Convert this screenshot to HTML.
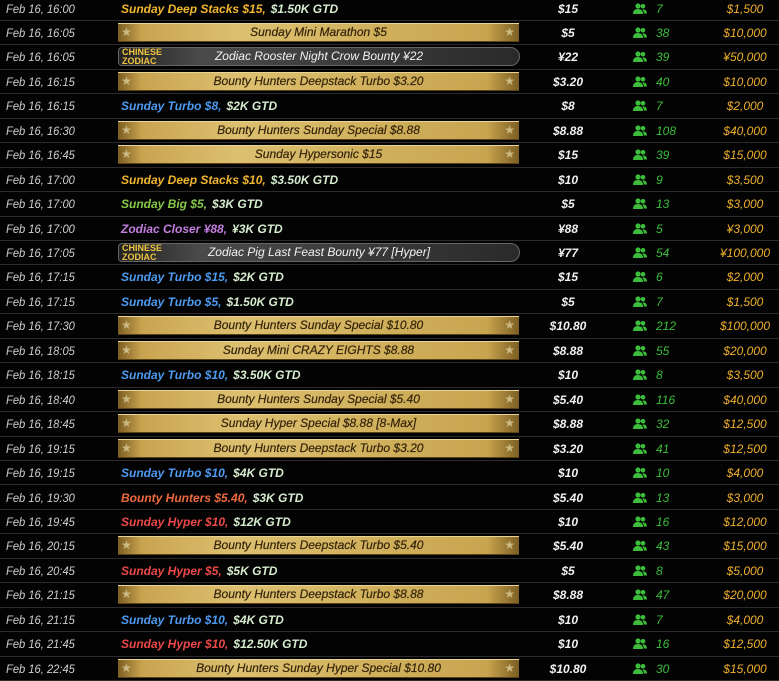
<!DOCTYPE html>
<html><head><meta charset="utf-8"><style>
*{margin:0;padding:0;box-sizing:border-box}
body{width:779px;height:681px;background:#030303;overflow:hidden;position:relative;font-family:"Liberation Sans",sans-serif;font-style:italic}
.r{position:absolute;left:0;width:779px;height:24.45px;border-bottom:1px solid #2b2b2b}
.t{position:absolute;left:6px;top:5px;font-size:12px;color:#cfcfcf;transform:scaleX(.93);transform-origin:left;white-space:nowrap}
.n{position:absolute;left:121px;top:5px;font-size:12px;font-weight:bold;white-space:nowrap}
.n i{color:#d6ecce;font-style:italic;margin-left:5px}
.y{color:#f2b62f}.b{color:#4e9af0}.g{color:#86c94a}.p{color:#c47ee0}.o{color:#ee6a3e}.rd{color:#ec4848}
.bn{position:absolute;left:118px;top:2px;width:401px;height:19px;background:linear-gradient(90deg,#7c5e22 0%,#c9a450 6%,#dcc070 30%,#d2b25e 60%,#c8a550 92%,#7c5e22 100%);border-top:1px solid #e8d494;border-bottom:1px solid #5a4318;text-align:center;font-size:12px;color:#33230a;line-height:17px;white-space:nowrap;-webkit-text-stroke:0.2px #33230a}
.bn:before,.bn:after{content:"★";position:absolute;top:0;font-size:12px;color:rgba(250,240,200,.55);font-style:normal;-webkit-text-stroke:0}
.bn:before{left:3px}.bn:after{right:4px}
.z{position:absolute;left:118px;top:2px;width:402px;height:19px;background:linear-gradient(90deg,#222 0%,#4a4a4a 20%,#3a3a3a 60%,#2a2a2a 100%);border:1px solid #666;border-radius:4px 10px 10px 4px;text-align:center;font-size:12px;color:#f2f2f2;line-height:17px;white-space:nowrap}
.z b{position:absolute;left:3px;top:0px;font-size:9px;line-height:8.5px;color:#f0c640;font-style:normal;text-align:left}
.bi{position:absolute;left:520px;width:96px;top:5px;text-align:center;font-size:12px;color:#f2f2f2;font-weight:bold}
.ic{position:absolute;left:633px;top:6px}
.c{position:absolute;left:656px;top:5px;font-size:12px;color:#3cbe3c}
.pz{position:absolute;left:700px;width:90px;top:5px;text-align:center;font-size:12px;color:#f0b02c}
</style></head><body>
<svg width="0" height="0" style="position:absolute"><defs><g id="u"><circle cx="5" cy="3" r="2.6" fill="#3cbe3c"/><circle cx="10" cy="3.3" r="2.3" fill="#3cbe3c"/><path d="M0 11 Q0 6 5 6 Q10 6 10 11Z" fill="#3cbe3c"/><path d="M9 6.4 Q14 6 14 10.5 L10.8 10.5 Q10.8 7.5 9 6.4Z" fill="#3cbe3c"/></g></defs></svg>

<div class="r" style="top:-3.5px"><span class="t">Feb 16, 16:00</span><span class="n y">Sunday Deep Stacks $15,<i>$1.50K GTD</i></span><span class="bi">$15</span><svg class="ic" width="15" height="12"><use href="#u"/></svg><span class="c">7</span><span class="pz">$1,500</span></div>
<div class="r" style="top:20.95px"><span class="t">Feb 16, 16:05</span><div class="bn">Sunday Mini Marathon $5</div><span class="bi">$5</span><svg class="ic" width="15" height="12"><use href="#u"/></svg><span class="c">38</span><span class="pz">$10,000</span></div>
<div class="r" style="top:45.4px"><span class="t">Feb 16, 16:05</span><div class="z"><b>CHINESE<br>ZODIAC</b>Zodiac Rooster Night Crow Bounty ¥22</div><span class="bi">¥22</span><svg class="ic" width="15" height="12"><use href="#u"/></svg><span class="c">39</span><span class="pz">¥50,000</span></div>
<div class="r" style="top:69.85px"><span class="t">Feb 16, 16:15</span><div class="bn">Bounty Hunters Deepstack Turbo $3.20</div><span class="bi">$3.20</span><svg class="ic" width="15" height="12"><use href="#u"/></svg><span class="c">40</span><span class="pz">$10,000</span></div>
<div class="r" style="top:94.3px"><span class="t">Feb 16, 16:15</span><span class="n b">Sunday Turbo $8,<i>$2K GTD</i></span><span class="bi">$8</span><svg class="ic" width="15" height="12"><use href="#u"/></svg><span class="c">7</span><span class="pz">$2,000</span></div>
<div class="r" style="top:118.75px"><span class="t">Feb 16, 16:30</span><div class="bn">Bounty Hunters Sunday Special $8.88</div><span class="bi">$8.88</span><svg class="ic" width="15" height="12"><use href="#u"/></svg><span class="c">108</span><span class="pz">$40,000</span></div>
<div class="r" style="top:143.2px"><span class="t">Feb 16, 16:45</span><div class="bn">Sunday Hypersonic $15</div><span class="bi">$15</span><svg class="ic" width="15" height="12"><use href="#u"/></svg><span class="c">39</span><span class="pz">$15,000</span></div>
<div class="r" style="top:167.65px"><span class="t">Feb 16, 17:00</span><span class="n y">Sunday Deep Stacks $10,<i>$3.50K GTD</i></span><span class="bi">$10</span><svg class="ic" width="15" height="12"><use href="#u"/></svg><span class="c">9</span><span class="pz">$3,500</span></div>
<div class="r" style="top:192.1px"><span class="t">Feb 16, 17:00</span><span class="n g">Sunday Big $5,<i>$3K GTD</i></span><span class="bi">$5</span><svg class="ic" width="15" height="12"><use href="#u"/></svg><span class="c">13</span><span class="pz">$3,000</span></div>
<div class="r" style="top:216.55px"><span class="t">Feb 16, 17:00</span><span class="n p">Zodiac Closer ¥88,<i>¥3K GTD</i></span><span class="bi">¥88</span><svg class="ic" width="15" height="12"><use href="#u"/></svg><span class="c">5</span><span class="pz">¥3,000</span></div>
<div class="r" style="top:241px"><span class="t">Feb 16, 17:05</span><div class="z"><b>CHINESE<br>ZODIAC</b>Zodiac Pig Last Feast Bounty ¥77 [Hyper]</div><span class="bi">¥77</span><svg class="ic" width="15" height="12"><use href="#u"/></svg><span class="c">54</span><span class="pz">¥100,000</span></div>
<div class="r" style="top:265.45px"><span class="t">Feb 16, 17:15</span><span class="n b">Sunday Turbo $15,<i>$2K GTD</i></span><span class="bi">$15</span><svg class="ic" width="15" height="12"><use href="#u"/></svg><span class="c">6</span><span class="pz">$2,000</span></div>
<div class="r" style="top:289.9px"><span class="t">Feb 16, 17:15</span><span class="n b">Sunday Turbo $5,<i>$1.50K GTD</i></span><span class="bi">$5</span><svg class="ic" width="15" height="12"><use href="#u"/></svg><span class="c">7</span><span class="pz">$1,500</span></div>
<div class="r" style="top:314.35px"><span class="t">Feb 16, 17:30</span><div class="bn">Bounty Hunters Sunday Special $10.80</div><span class="bi">$10.80</span><svg class="ic" width="15" height="12"><use href="#u"/></svg><span class="c">212</span><span class="pz">$100,000</span></div>
<div class="r" style="top:338.8px"><span class="t">Feb 16, 18:05</span><div class="bn">Sunday Mini CRAZY EIGHTS $8.88</div><span class="bi">$8.88</span><svg class="ic" width="15" height="12"><use href="#u"/></svg><span class="c">55</span><span class="pz">$20,000</span></div>
<div class="r" style="top:363.25px"><span class="t">Feb 16, 18:15</span><span class="n b">Sunday Turbo $10,<i>$3.50K GTD</i></span><span class="bi">$10</span><svg class="ic" width="15" height="12"><use href="#u"/></svg><span class="c">8</span><span class="pz">$3,500</span></div>
<div class="r" style="top:387.7px"><span class="t">Feb 16, 18:40</span><div class="bn">Bounty Hunters Sunday Special $5.40</div><span class="bi">$5.40</span><svg class="ic" width="15" height="12"><use href="#u"/></svg><span class="c">116</span><span class="pz">$40,000</span></div>
<div class="r" style="top:412.15px"><span class="t">Feb 16, 18:45</span><div class="bn">Sunday Hyper Special $8.88 [8-Max]</div><span class="bi">$8.88</span><svg class="ic" width="15" height="12"><use href="#u"/></svg><span class="c">32</span><span class="pz">$12,500</span></div>
<div class="r" style="top:436.6px"><span class="t">Feb 16, 19:15</span><div class="bn">Bounty Hunters Deepstack Turbo $3.20</div><span class="bi">$3.20</span><svg class="ic" width="15" height="12"><use href="#u"/></svg><span class="c">41</span><span class="pz">$12,500</span></div>
<div class="r" style="top:461.05px"><span class="t">Feb 16, 19:15</span><span class="n b">Sunday Turbo $10,<i>$4K GTD</i></span><span class="bi">$10</span><svg class="ic" width="15" height="12"><use href="#u"/></svg><span class="c">10</span><span class="pz">$4,000</span></div>
<div class="r" style="top:485.5px"><span class="t">Feb 16, 19:30</span><span class="n o">Bounty Hunters $5.40,<i>$3K GTD</i></span><span class="bi">$5.40</span><svg class="ic" width="15" height="12"><use href="#u"/></svg><span class="c">13</span><span class="pz">$3,000</span></div>
<div class="r" style="top:509.95px"><span class="t">Feb 16, 19:45</span><span class="n rd">Sunday Hyper $10,<i>$12K GTD</i></span><span class="bi">$10</span><svg class="ic" width="15" height="12"><use href="#u"/></svg><span class="c">16</span><span class="pz">$12,000</span></div>
<div class="r" style="top:534.4px"><span class="t">Feb 16, 20:15</span><div class="bn">Bounty Hunters Deepstack Turbo $5.40</div><span class="bi">$5.40</span><svg class="ic" width="15" height="12"><use href="#u"/></svg><span class="c">43</span><span class="pz">$15,000</span></div>
<div class="r" style="top:558.85px"><span class="t">Feb 16, 20:45</span><span class="n rd">Sunday Hyper $5,<i>$5K GTD</i></span><span class="bi">$5</span><svg class="ic" width="15" height="12"><use href="#u"/></svg><span class="c">8</span><span class="pz">$5,000</span></div>
<div class="r" style="top:583.3px"><span class="t">Feb 16, 21:15</span><div class="bn">Bounty Hunters Deepstack Turbo $8.88</div><span class="bi">$8.88</span><svg class="ic" width="15" height="12"><use href="#u"/></svg><span class="c">47</span><span class="pz">$20,000</span></div>
<div class="r" style="top:607.75px"><span class="t">Feb 16, 21:15</span><span class="n b">Sunday Turbo $10,<i>$4K GTD</i></span><span class="bi">$10</span><svg class="ic" width="15" height="12"><use href="#u"/></svg><span class="c">7</span><span class="pz">$4,000</span></div>
<div class="r" style="top:632.2px"><span class="t">Feb 16, 21:45</span><span class="n rd">Sunday Hyper $10,<i>$12.50K GTD</i></span><span class="bi">$10</span><svg class="ic" width="15" height="12"><use href="#u"/></svg><span class="c">16</span><span class="pz">$12,500</span></div>
<div class="r" style="top:656.65px"><span class="t">Feb 16, 22:45</span><div class="bn">Bounty Hunters Sunday Hyper Special $10.80</div><span class="bi">$10.80</span><svg class="ic" width="15" height="12"><use href="#u"/></svg><span class="c">30</span><span class="pz">$15,000</span></div>
</body></html>
